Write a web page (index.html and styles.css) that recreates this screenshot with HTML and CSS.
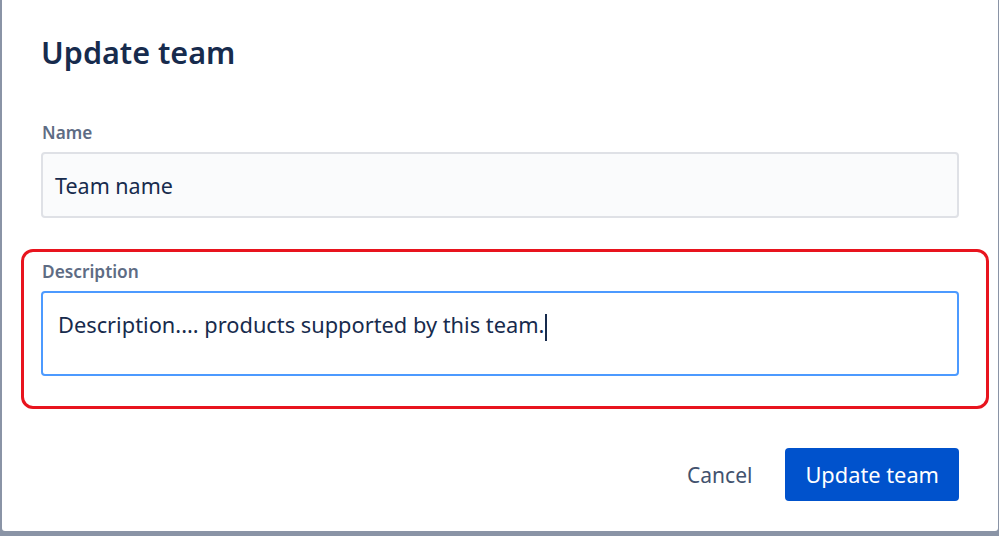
FILE: index.html
```html
<!DOCTYPE html>
<html>
<head>
<meta charset="utf-8">
<link rel="stylesheet" href="styles.css">
</head>
<body>
<div class="dialog">
  <h1 class="title">Update team</h1>
  <div class="field">
    <label class="label">Name</label>
    <div class="input input-name">Team name</div>
  </div>
  <div class="highlight">
    <label class="label">Description</label>
    <div class="input input-desc">Description.... products supported by this team.<span class="caret"></span></div>
  </div>
  <div class="footer">
    <span class="cancel">Cancel</span>
    <span class="primary">Update team</span>
  </div>
</div>
</body>
</html>
```
FILE: styles.css
```css
html, body {
  margin: 0;
  padding: 0;
  height: 536px;
  overflow: hidden;
  background: #8a94a6;
}
body {
  padding-left: 2px;
  box-sizing: border-box;
  font-family: "Noto Sans", "Open Sans", sans-serif;
  color: #172b4d;
}
.dialog {
  background: #fff;
  width: 996px;
  height: 531px;
  border-bottom-left-radius: 3px;
  border-bottom-right-radius: 3px;
  box-sizing: border-box;
  padding: 30px 0 0 39px;
  display: flex;
  flex-direction: column;
}
.title {
  margin: 0;
  font-size: 30.5px;
  font-weight: 600;
  line-height: 44px;
  color: #172b4d;
}
.field {
  margin-top: 48px;
  width: 918px;
}
.label {
  display: block;
  font-size: 17.2px;
  font-weight: 600;
  color: #5e6c84;
  line-height: 22px;
  margin-left: 1px;
}
.input {
  box-sizing: border-box;
  border: 2px solid #dfe1e6;
  border-radius: 4px;
  background: #fafbfc;
  font-size: 21.5px;
  padding: 0 12px;
  display: flex;
  align-items: center;
}
.input-name {
  height: 66px;
  margin-top: 8px;
}
.highlight {
  margin-top: 31px;
  margin-left: -20px;
  width: 968px;
  height: 160px;
  box-sizing: border-box;
  border: 3px solid #e8141e;
  border-radius: 12px;
  padding: 9px 0 0 17px;
}
.highlight .label {
  font-size: 17.3px;
}
.input-desc {
  width: 918px;
  height: 85px;
  margin-top: 8px;
  background: #fff;
  border-color: #4c9aff;
  align-items: flex-start;
  padding: 17px 15px 0;
  font-size: 21.8px;
}
.caret {
  display: inline-block;
  width: 2px;
  height: 27px;
  background: #172b4d;
  margin-left: 1px;
  margin-top: 4px;
}
.footer {
  margin-top: 39px;
  width: 918px;
  display: flex;
  justify-content: flex-end;
  align-items: center;
  gap: 33px;
}
.cancel {
  font-size: 21px;
  color: #42526e;
}
.primary {
  background: #0052cc;
  color: #fff;
  font-size: 21.8px;
  height: 53px;
  display: flex;
  align-items: center;
  padding: 0 20px;
  border-radius: 4px;
}
```
